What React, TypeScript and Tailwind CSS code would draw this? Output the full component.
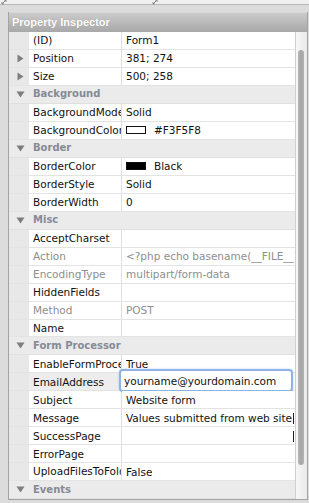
import React from "react";

type Row =
  | { kind: "section"; label: string }
  | {
      kind: "prop";
      name: string;
      value?: string;
      expand?: boolean;
      disabled?: boolean;
      swatch?: "white" | "black";
      editing?: boolean;
      caret?: boolean;
      selected?: boolean;
    };

const rows: Row[] = [
  { kind: "prop", name: "(ID)", value: "Form1" },
  { kind: "prop", name: "Position", value: "381; 274", expand: true },
  { kind: "prop", name: "Size", value: "500; 258", expand: true },
  { kind: "section", label: "Background" },
  { kind: "prop", name: "BackgroundMode", value: "Solid" },
  { kind: "prop", name: "BackgroundColor", value: "#F3F5F8", swatch: "white" },
  { kind: "section", label: "Border" },
  { kind: "prop", name: "BorderColor", value: "Black", swatch: "black" },
  { kind: "prop", name: "BorderStyle", value: "Solid" },
  { kind: "prop", name: "BorderWidth", value: "0" },
  { kind: "section", label: "Misc" },
  { kind: "prop", name: "AcceptCharset", value: "" },
  { kind: "prop", name: "Action", value: "<?php echo basename(__FILE__); ?>", disabled: true },
  { kind: "prop", name: "EncodingType", value: "multipart/form-data", disabled: true },
  { kind: "prop", name: "HiddenFields", value: "" },
  { kind: "prop", name: "Method", value: "POST", disabled: true },
  { kind: "prop", name: "Name", value: "" },
  { kind: "section", label: "Form Processor" },
  { kind: "prop", name: "EnableFormProcessor", value: "True" },
  { kind: "prop", name: "EmailAddress", value: "yourname@yourdomain.com", editing: true, selected: true },
  { kind: "prop", name: "Subject", value: "Website form" },
  { kind: "prop", name: "Message", value: "Values submitted from web site", caret: true },
  { kind: "prop", name: "SuccessPage", value: "", caret: true },
  { kind: "prop", name: "ErrorPage", value: "" },
  { kind: "prop", name: "UploadFilesToFolder", value: "False" },
  { kind: "section", label: "Events" },
];

function RightTri() {
  return (
    <svg width="7" height="9" viewBox="0 0 7 9">
      <path d="M0.5 0.5 L6.5 4.5 L0.5 8.5 Z" fill="#7f7f7f" />
    </svg>
  );
}

function DownTri() {
  return (
    <svg width="9" height="7" viewBox="0 0 9 7">
      <path d="M0.5 0.5 L8.5 0.5 L4.5 6.5 Z" fill="#7d7d7d" />
    </svg>
  );
}

function Grip() {
  return (
    <svg width="6" height="6" viewBox="0 0 6 6">
      <path d="M1 5 L5 1 M1 5 L1 3 M1 5 L3 5 M5 1 L3 1 M5 1 L5 3" stroke="#8a8a8a" strokeWidth="1" fill="none" />
    </svg>
  );
}

function PropRow({ row }: { row: Extract<Row, { kind: "prop" }> }) {
  const nameColor = row.disabled ? "text-[#8e8e8e]" : "text-[#111111]";
  const valColor = row.disabled ? "text-[#8e8e8e]" : "text-[#111111]";
  return (
    <div className="flex h-[18px] border-b border-[#e3e3e3] min-w-0">
      <div className="w-[20px] shrink-0 bg-[#e8e8e8] flex items-center pl-[8px]">
        {row.expand ? <RightTri /> : null}
      </div>
      <div
        className={`w-[93px] shrink-0 border-r border-[#dedede] flex items-center pl-[4px] overflow-hidden whitespace-nowrap ${
          row.selected ? "bg-[#ededed]" : "bg-white"
        } ${nameColor}`}
      >
        {row.name}
      </div>
      <div className={`relative flex-1 min-w-0 w-0 bg-white flex items-center pl-[4px] whitespace-nowrap ${valColor}`}>
        {row.swatch ? (
          <span
            className={`inline-block shrink-0 w-[20px] h-[8px] mr-[8px] border border-[#111] ${
              row.swatch === "black" ? "bg-[#000]" : "bg-white"
            }`}
          />
        ) : null}
        {row.editing ? (
          <div className="absolute left-[-3px] right-[2px] top-[-4px] bottom-[-2px] rounded-[4px] border-2 border-[#8eb4e6] bg-white flex items-center pl-[3px] text-[#111] shadow-[0_0_2px_#a9c8ef]">
            {row.value}
          </div>
        ) : (
          <span className="overflow-hidden block min-w-0 leading-[14px]">{row.value}</span>
        )}
        {row.caret ? <div className="absolute right-[1px] top-[4px] w-[1px] h-[11px] bg-[#222]" /> : null}
      </div>
    </div>
  );
}

function SectionRow({ label }: { label: string }) {
  return (
    <div className="flex h-[18px] border-b border-[#e0e0e0] bg-[#ebebeb]">
      <div className="w-[20px] shrink-0 flex items-center pl-[7px]">
        <DownTri />
      </div>
      <div className="flex items-center pl-[4px] font-bold text-[10px] text-[#858a95] whitespace-nowrap">{label}</div>
    </div>
  );
}

export default function App() {
  return (
    <div
      className="w-[309px] h-[503px] overflow-hidden bg-[#d9d9d9] flex flex-col text-[10.5px] leading-none"
      style={{ fontFamily: '"DejaVu Sans", Verdana, sans-serif' }}
    >
      <div className="h-[5px] shrink-0 bg-[#efefef] border-b border-[#b8b8b8] relative">
        <div className="absolute left-[1px] top-[-1px]">
          <Grip />
        </div>
        <div className="absolute left-[152px] top-[-1px]">
          <Grip />
        </div>
      </div>
      <div className="flex-1 flex pl-[8px] pr-[1px] pt-[7px] pb-[3px] bg-[#dcdcdc] min-h-0 min-w-0">
        <div className="flex-1 min-w-0 w-0 flex flex-col border-l border-r border-b border-[#a3a3a3] bg-[#e8e8e8] min-h-0">
          <div
            className="h-[20px] shrink-0 flex items-center pl-[3px] text-white text-[11px] font-bold bg-gradient-to-b from-[#cbcbcb] to-[#a8a8a8] border-t border-[#d8d8d8] [text-shadow:0_0_1px_rgba(0,0,0,0.2)]"
            style={{ fontFamily: '"Liberation Sans", Arial, sans-serif' }}
          >
            Property Inspector
          </div>
          <div className="flex-1 flex min-h-0 min-w-0 overflow-hidden">
            <div className="flex-1 min-w-0 w-0 flex flex-col border-r border-[#cfcfcf]">
              {rows.map((r, i) =>
                r.kind === "section" ? <SectionRow key={i} label={r.label} /> : <PropRow key={i} row={r} />
              )}
            </div>
            <div className="w-[11px] shrink-0 bg-gradient-to-r from-[#f7f7f7] to-[#e9e9e9] pt-[18px] pl-[2px] pr-[3px]">
              <div className="h-[415px] w-[6px] rounded-full bg-gradient-to-r from-[#b8b8b8] via-[#a5a5a5] to-[#b3b3b3]" />
            </div>
          </div>
        </div>
      </div>
    </div>
  );
}
